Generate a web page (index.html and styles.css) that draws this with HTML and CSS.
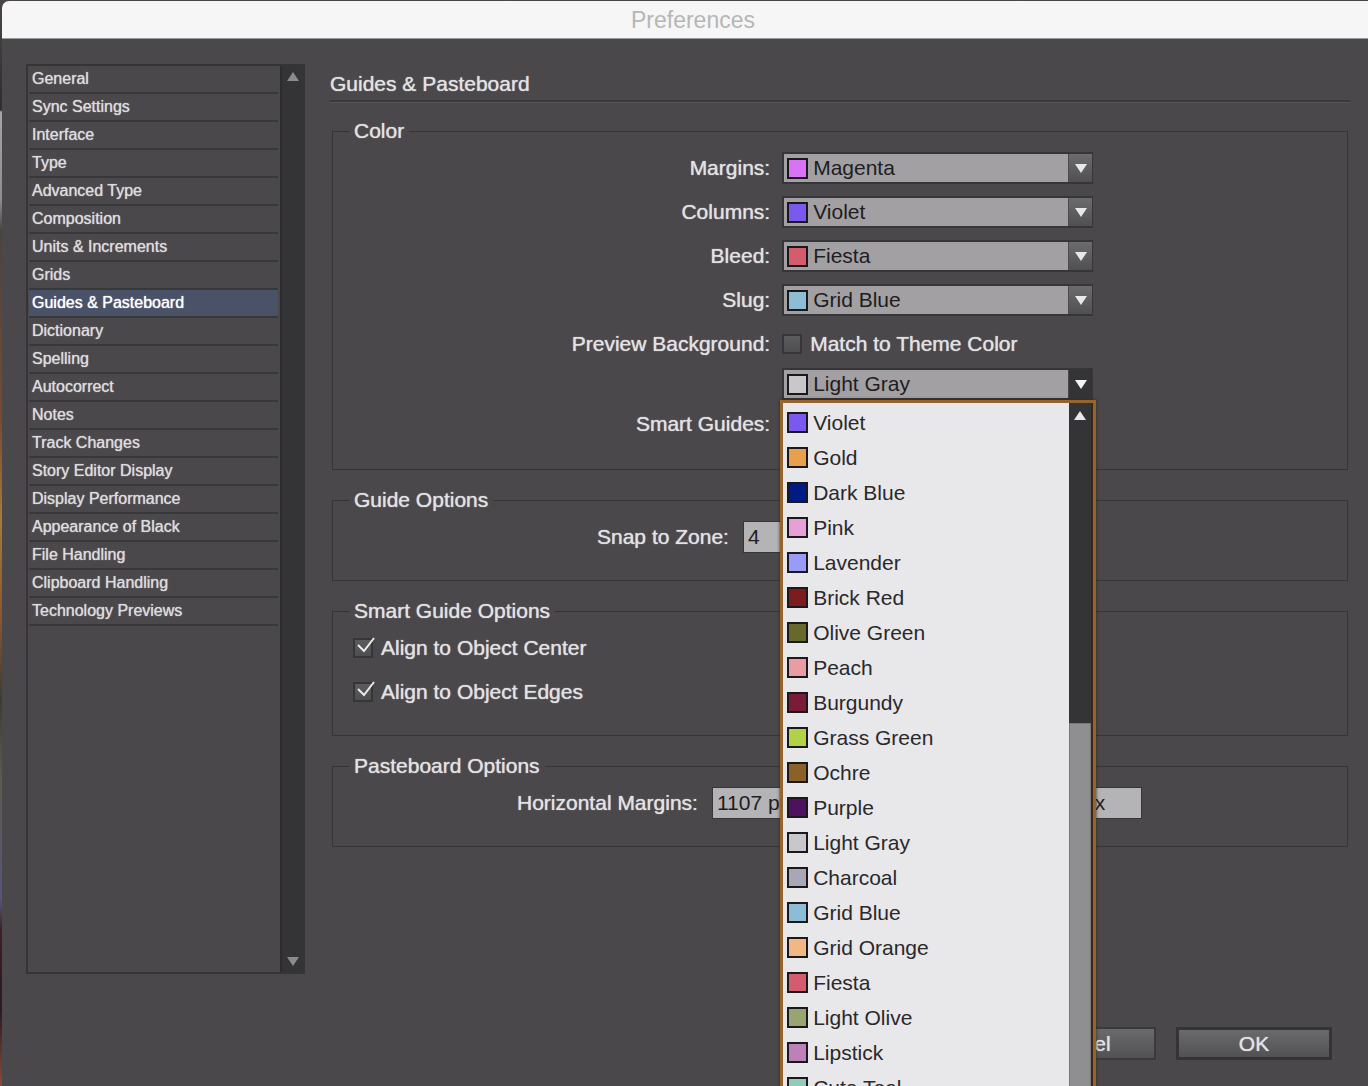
FILE: index.html
```
<!DOCTYPE html>
<html lang="en">
<head>
  <meta charset="UTF-8">
  <title>Preferences</title>
  <link rel="stylesheet" href="styles.css">
</head>
<body>

  <div class="dialog">
    <header class="titlebar">Preferences</header>

    <div class="content">
      <nav class="sidebar">
        <ul class="sections">
          <li><a href="#">General</a></li>
          <li><a href="#">Sync Settings</a></li>
          <li><a href="#">Interface</a></li>
          <li><a href="#">Type</a></li>
          <li><a href="#">Advanced Type</a></li>
          <li><a href="#">Composition</a></li>
          <li><a href="#">Units &amp; Increments</a></li>
          <li><a href="#">Grids</a></li>
          <li><a href="#" class="active">Guides &amp; Pasteboard</a></li>
          <li><a href="#">Dictionary</a></li>
          <li><a href="#">Spelling</a></li>
          <li><a href="#">Autocorrect</a></li>
          <li><a href="#">Notes</a></li>
          <li><a href="#">Track Changes</a></li>
          <li><a href="#">Story Editor Display</a></li>
          <li><a href="#">Display Performance</a></li>
          <li><a href="#">Appearance of Black</a></li>
          <li><a href="#">File Handling</a></li>
          <li><a href="#">Clipboard Handling</a></li>
          <li><a href="#">Technology Previews</a></li>
        </ul>
        <div class="side-scroll">
          <svg width="12" height="9" viewBox="0 0 12 9"><path d="M6 0 12 9H0z" fill="#8b8a8c"/></svg>
          <svg width="12" height="9" viewBox="0 0 12 9"><path d="M0 0h12L6 9z" fill="#8b8a8c"/></svg>
        </div>
      </nav>

      <form class="panel">
        <h1>Guides &amp; Pasteboard</h1>

        <fieldset class="group color-group">
          <legend>Color</legend>
          <div class="row">
            <label class="row-label" for="margins">Margins:</label>
            <div class="color-select">
              <span class="swatch magenta"></span>
              <select id="margins"><option>Magenta</option></select>
              <span class="arrow"><svg width="12" height="9" viewBox="0 0 12 9"><path d="M0 0h12L6 9z" fill="#e8e8e8"/></svg></span>
            </div>
          </div>
          <div class="row">
            <label class="row-label" for="columns">Columns:</label>
            <div class="color-select">
              <span class="swatch violet"></span>
              <select id="columns"><option>Violet</option></select>
              <span class="arrow"><svg width="12" height="9" viewBox="0 0 12 9"><path d="M0 0h12L6 9z" fill="#e8e8e8"/></svg></span>
            </div>
          </div>
          <div class="row">
            <label class="row-label" for="bleed">Bleed:</label>
            <div class="color-select">
              <span class="swatch fiesta"></span>
              <select id="bleed"><option>Fiesta</option></select>
              <span class="arrow"><svg width="12" height="9" viewBox="0 0 12 9"><path d="M0 0h12L6 9z" fill="#e8e8e8"/></svg></span>
            </div>
          </div>
          <div class="row">
            <label class="row-label" for="slug">Slug:</label>
            <div class="color-select">
              <span class="swatch grid-blue"></span>
              <select id="slug"><option>Grid Blue</option></select>
              <span class="arrow"><svg width="12" height="9" viewBox="0 0 12 9"><path d="M0 0h12L6 9z" fill="#e8e8e8"/></svg></span>
            </div>
          </div>
          <div class="row tight">
            <span class="row-label">Preview Background:</span>
            <label class="check"><input type="checkbox"> Match to Theme Color</label>
          </div>
          <div class="row tight">
            <label class="row-label" for="preview"></label>
            <div class="color-select open">
              <span class="swatch light-gray"></span>
              <select id="preview" aria-label="Preview Background"><option>Light Gray</option></select>
              <span class="arrow"><svg width="12" height="9" viewBox="0 0 12 9"><path d="M0 0h12L6 9z" fill="#f4f4f4"/></svg></span>

              <!-- open colour list -->
              <div class="popup">
                <ul class="options" role="listbox">
                  <li role="option"><span class="swatch violet"></span>Violet</li>
                  <li role="option"><span class="swatch gold"></span>Gold</li>
                  <li role="option"><span class="swatch dark-blue"></span>Dark Blue</li>
                  <li role="option"><span class="swatch pink"></span>Pink</li>
                  <li role="option"><span class="swatch lavender"></span>Lavender</li>
                  <li role="option"><span class="swatch brick-red"></span>Brick Red</li>
                  <li role="option"><span class="swatch olive-green"></span>Olive Green</li>
                  <li role="option"><span class="swatch peach"></span>Peach</li>
                  <li role="option"><span class="swatch burgundy"></span>Burgundy</li>
                  <li role="option"><span class="swatch grass-green"></span>Grass Green</li>
                  <li role="option"><span class="swatch ochre"></span>Ochre</li>
                  <li role="option"><span class="swatch purple"></span>Purple</li>
                  <li role="option"><span class="swatch light-gray"></span>Light Gray</li>
                  <li role="option"><span class="swatch charcoal"></span>Charcoal</li>
                  <li role="option"><span class="swatch grid-blue"></span>Grid Blue</li>
                  <li role="option"><span class="swatch grid-orange"></span>Grid Orange</li>
                  <li role="option"><span class="swatch fiesta"></span>Fiesta</li>
                  <li role="option"><span class="swatch light-olive"></span>Light Olive</li>
                  <li role="option"><span class="swatch lipstick"></span>Lipstick</li>
                  <li role="option"><span class="swatch cute-teal"></span>Cute Teal</li>
                </ul>
                <div class="popup-scroll">
                  <svg width="12" height="9" viewBox="0 0 12 9"><path d="M6 0 12 9H0z" fill="#e8e8e8"/></svg>
                  <div class="thumb"></div>
                </div>
              </div>
            </div>
          </div>
          <div class="row">
            <span class="row-label">Smart Guides:</span>
          </div>
        </fieldset>

        <fieldset class="group">
          <legend>Guide Options</legend>
          <div class="fields snap">
            <label for="snap">Snap to Zone:</label>
            <input type="text" id="snap" value="4">
          </div>
        </fieldset>

        <fieldset class="group">
          <legend>Smart Guide Options</legend>
          <div class="checks">
            <label class="check">
              <input type="checkbox" checked>
              <svg class="tick" width="20" height="20" viewBox="0 0 20 20"><path d="M2 9 8 15 18 2" fill="none" stroke="#ececec" stroke-width="2"/></svg>
              Align to Object Center
            </label>
            <label class="check">
              <input type="checkbox" checked>
              <svg class="tick" width="20" height="20" viewBox="0 0 20 20"><path d="M2 9 8 15 18 2" fill="none" stroke="#ececec" stroke-width="2"/></svg>
              Align to Object Edges
            </label>
          </div>
        </fieldset>

        <fieldset class="group">
          <legend>Pasteboard Options</legend>
          <div class="fields pasteboard">
            <label for="hmargin">Horizontal Margins:</label>
            <input type="text" id="hmargin" value="1107 px">
            <label class="second" for="vmargin">Vertical Margins:</label>
            <input type="text" id="vmargin" value="100 px">
          </div>
        </fieldset>

        <div class="buttons">
          <button type="button">Cancel</button>
          <button type="submit" class="default">OK</button>
        </div>
      </form>
    </div>
  </div>

</body>
</html>
```
FILE: styles.css
```
* {
  box-sizing: border-box;
}
body {
  margin: 0;
  height: 100vh;
  overflow: hidden;
  padding: 1px 0 0 2px;
  background: linear-gradient(#4a4648 0, #2e2c2e 110px, #a5a5a5 112px, #8e8e8e 200px, #4a4440 230px, #7a4a30 420px, #a87a3c 520px, #8a5530 620px, #3c3c30 700px, #5c5c50 780px, #55557a 900px, #3c2024 930px, #2a1c20 1010px, #8a4a3a 1086px);
  font-family: "Liberation Sans", Arial, sans-serif;
  font-size: 21px;
  line-height: 24px;
  color: #e2e1e3;
}
.dialog {
  display: flex;
  flex-direction: column;
  height: 100%;
  background: #4a484a;
  border-top-left-radius: 7px;
  overflow: hidden;
}
.titlebar {
  height: 38px;
  padding-left: 16px;
  background: #f6f6f6;
  border-bottom: 1px solid #9a9c9c;
  color: #b6b6b6;
  font-size: 23px;
  line-height: 38px;
  text-align: center;
}
.content {
  flex: 1;
  display: flex;
  gap: 25px;
  padding: 25px 18px 0 24px;
}

/* section list */
.sidebar {
  display: flex;
  width: 279px;
  margin-bottom: 112px;
  border: 2px solid #353436;
  font-size: 16px;
}
.sections {
  flex: 1;
  margin: 0;
  padding: 0 2px 0 1px;
  list-style: none;
}
.sections a {
  display: block;
  height: 28px;
  padding-left: 3px;
  border-bottom: 2px solid #383739;
  color: #dcdbdd;
  line-height: 25px;
  text-decoration: none;
  text-shadow: 0 0 1px #dcdbdd;
}
.sections a.active {
  background: #4a5268;
  color: #fff;
  text-shadow: 0 0 1px #fff;
}
.side-scroll {
  display: flex;
  flex-direction: column;
  justify-content: space-between;
  align-items: center;
  width: 23px;
  padding: 6px 0;
  background: #343335;
  border-left: 2px solid #2c2b2d;
}

/* right panel */
.panel {
  flex: 1;
  display: flex;
  flex-direction: column;
  text-shadow: 0 0 1px #e2e1e3;
}
h1 {
  margin: 0 0 17px;
  padding: 8px 0 4px;
  border-bottom: 2px solid #3a393b;
  box-shadow: 0 1px #565557;
  font-size: 21px;
  font-weight: normal;
  line-height: 24px;
}
.group {
  margin: 0 2px 18px;
  padding: 9px 0 27px;
  border: 1px solid #353436;
  min-width: 0;
}
.color-group {
  padding-bottom: 29px;
}
.group legend {
  margin-left: 16px;
  padding: 0 5px;
}
.row {
  display: flex;
  gap: 12px;
  height: 32px;
  align-items: center;
  margin-bottom: 12px;
  padding-left: 2px;
}
.row.tight {
  margin-bottom: 8px;
}
.row:last-child {
  margin-bottom: 0;
}
.row-label {
  width: 43%;
  text-align: right;
}

/* colour drop-downs */
.color-select {
  position: relative;
  display: flex;
  align-items: center;
  width: 311px;
  height: 32px;
  padding-left: 3px;
  background: #a2a0a3;
  border: 2px solid #363537;
  border-right-width: 1px;
  text-shadow: none;
}
.color-select select {
  flex: 1;
  height: 28px;
  padding: 0 0 0 5px;
  appearance: none;
  background: none;
  border: 0;
  color: #1e1d1f;
  font: inherit;
}
.arrow {
  display: flex;
  align-items: center;
  justify-content: center;
  width: 24px;
  height: 28px;
  background: linear-gradient(#6c6b6d, #505052);
  border-left: 1px solid #4a494b;
}
.open .arrow {
  background: #343335;
}
.swatch {
  width: 21px;
  height: 21px;
  border: 2px solid #1a181a;
}
.magenta { background: #d873f5; }
.violet { background: #7b58ee; }
.gold { background: #e8a04c; }
.dark-blue { background: #001c84; }
.pink { background: #e8a0d4; }
.lavender { background: #989cf8; }
.brick-red { background: #7c1c1e; }
.olive-green { background: #66692a; }
.peach { background: #e89ca4; }
.burgundy { background: #7a1c38; }
.grass-green { background: #b0d244; }
.ochre { background: #8a6228; }
.purple { background: #4c125e; }
.light-gray { background: #c8c7cb; }
.charcoal { background: #a9a7b6; }
.grid-blue { background: #8cbcd6; }
.grid-orange { background: #f2b884; }
.fiesta { background: #d45c6c; }
.light-olive { background: #98a472; }
.lipstick { background: #be80b8; }
.cute-teal { background: #90ccb8; }

.popup {
  position: absolute;
  top: 30px;
  left: -4px;
  z-index: 2;
  display: flex;
  width: 316px;
  background: #e8e7ea;
  border: 3px solid #94662e;
  box-shadow: 0 0 3px #33291f;
  color: #2a292b;
}
.options {
  flex: 1;
  margin: 0;
  padding: 2px 0 0 4px;
  list-style: none;
}
.options li {
  display: flex;
  align-items: center;
  gap: 5px;
  height: 35px;
}
.popup-scroll {
  position: relative;
  width: 24px;
  padding: 8px 5px;
  background: #343335;
  border-right: 2px solid #3a2818;
}
.popup-scroll svg {
  display: block;
}
.thumb {
  position: absolute;
  top: 320px;
  right: 0;
  bottom: 0;
  left: 0;
  background: #8f8e91;
  border: 1px solid #777679;
}

/* checkboxes */
.check {
  position: relative;
  display: flex;
  align-items: center;
  gap: 8px;
  height: 32px;
}
.check input {
  appearance: none;
  width: 20px;
  height: 20px;
  margin: 0;
  background: linear-gradient(#5c5b5d, #4e4d4f);
  border: 2px solid #363537;
}
.tick {
  position: absolute;
  top: 4px;
  left: 3px;
}
.checks {
  display: flex;
  flex-direction: column;
  gap: 12px;
  padding-left: 20px;
}

/* text fields */
.fields {
  display: flex;
  align-items: center;
  gap: 14px;
}
.fields input {
  width: 105px;
  height: 32px;
  padding: 0 4px;
  background: #b4b3b5;
  border: 1px solid #363537;
  color: #1e1d1f;
  font: inherit;
}
.snap {
  padding-left: 264px;
}
.pasteboard {
  padding-left: 184px;
}
.pasteboard .second {
  margin-left: 37px;
}

.buttons {
  display: flex;
  justify-content: flex-end;
  gap: 20px;
  margin: auto 18px 26px 0;
}
.buttons button {
  width: 156px;
  height: 33px;
  background: linear-gradient(#6a696b, #525153);
  border: 2px solid #3a393b;
  color: #e2e1e3;
  font: inherit;
  text-shadow: inherit;
}
.buttons .default {
  border: 3px solid #343335;
}
```
